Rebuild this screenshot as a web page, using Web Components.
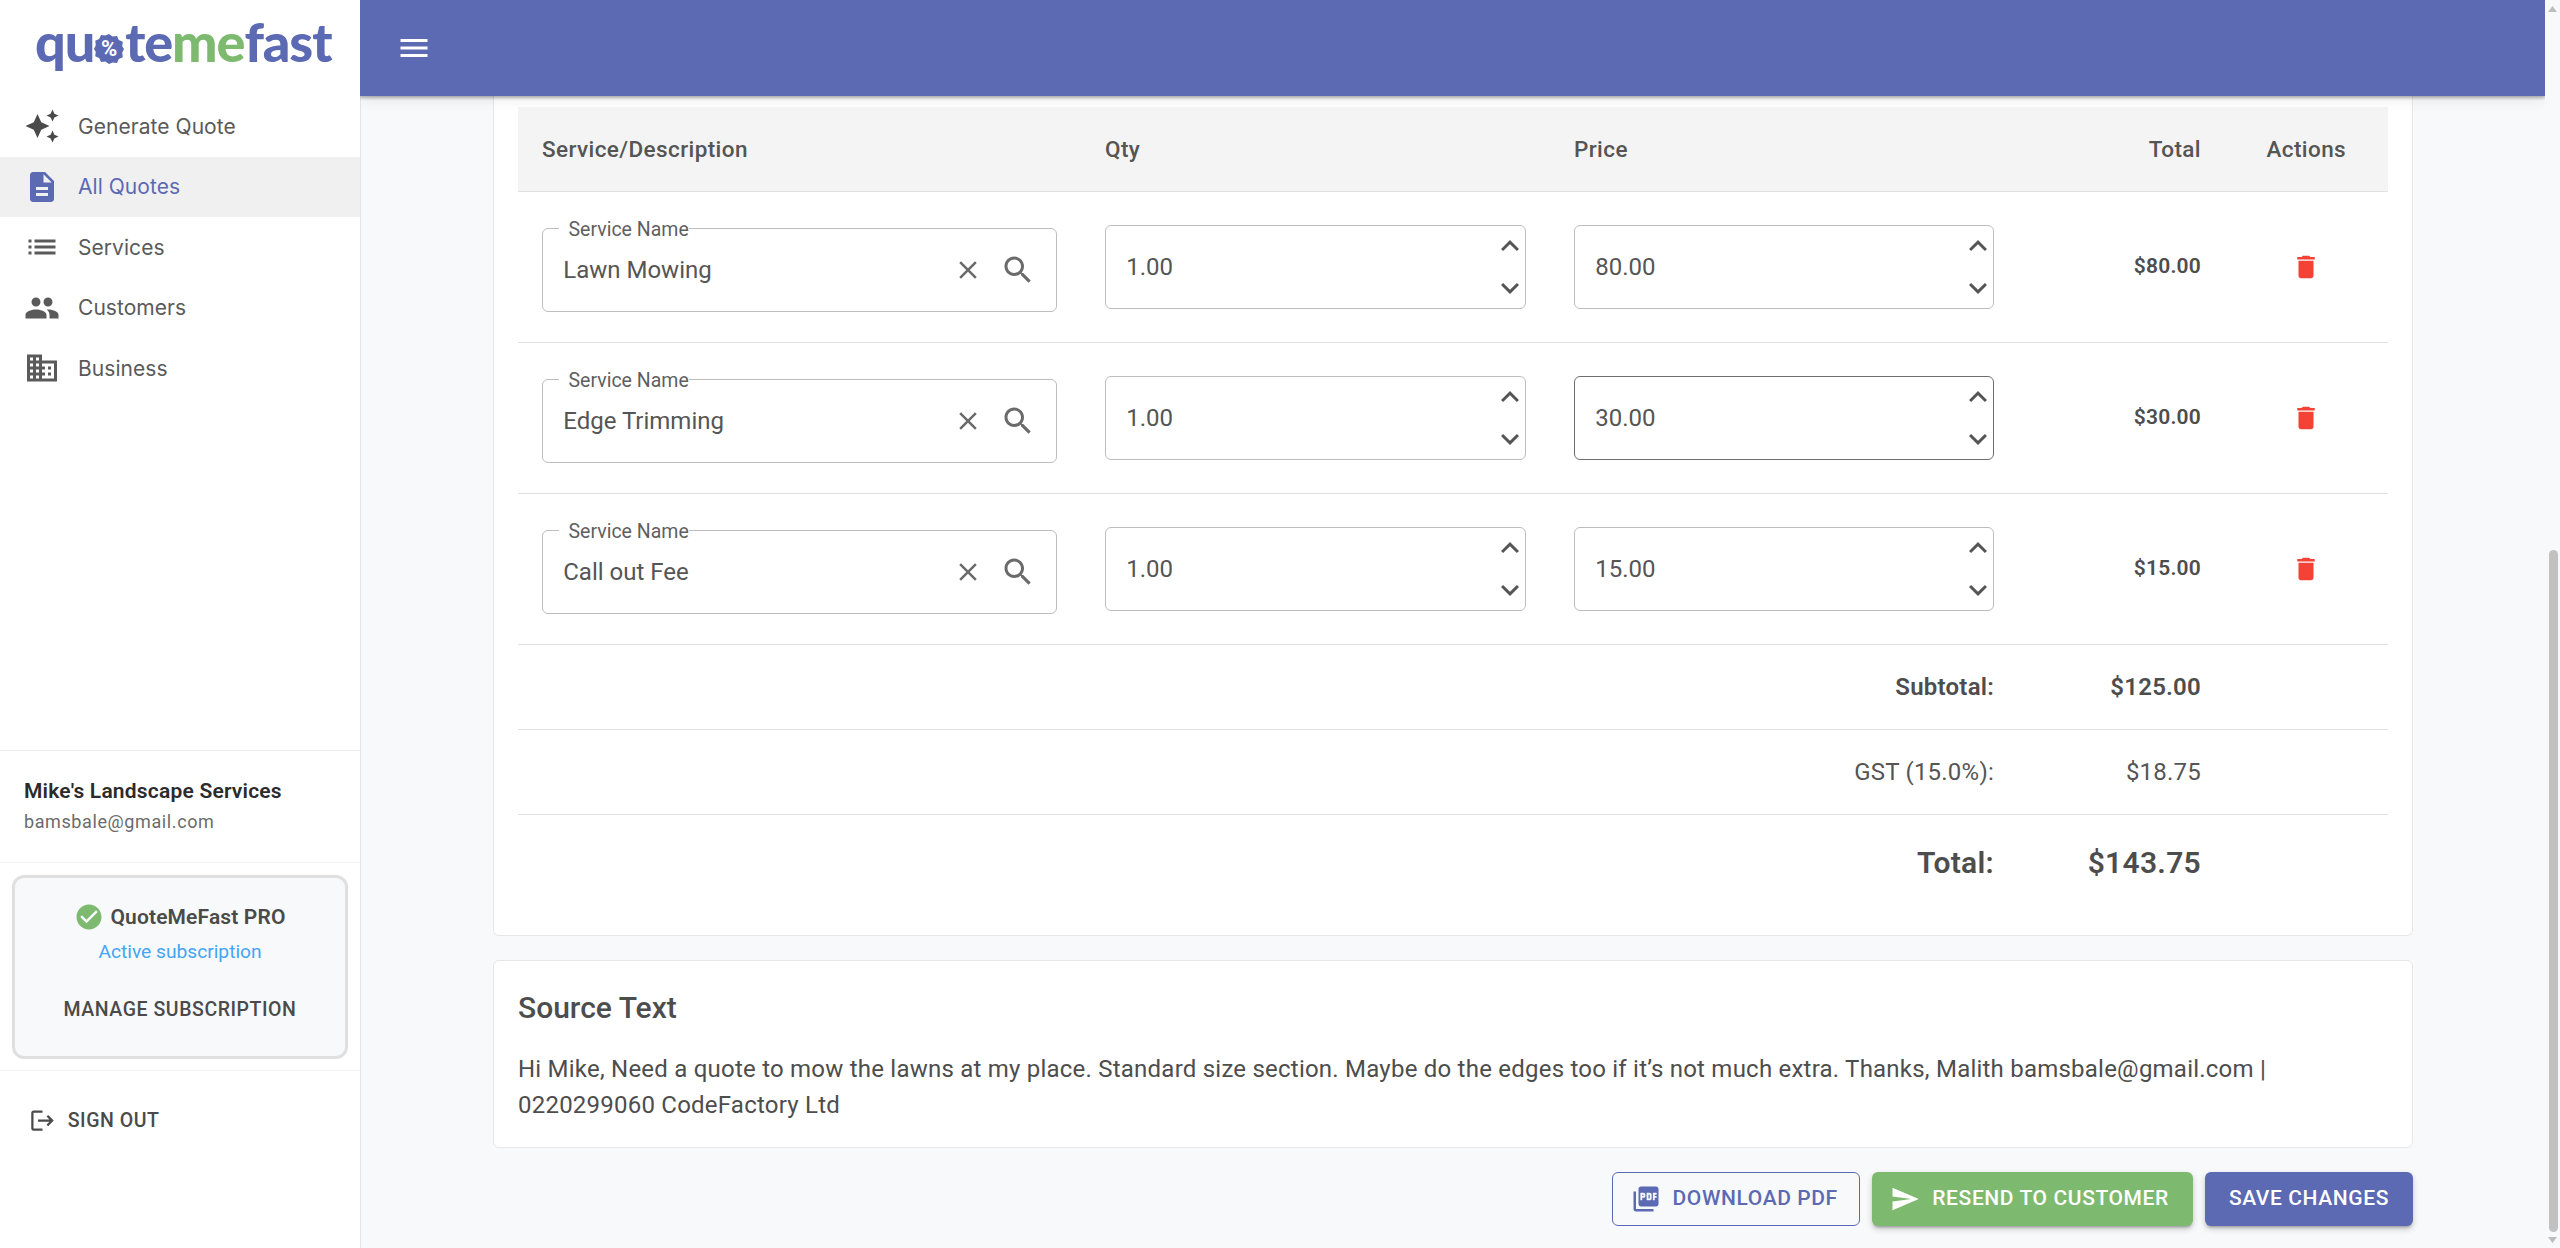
<!DOCTYPE html>
<html><head><meta charset="utf-8">
<style>
html,body{margin:0;padding:0;height:1248px;overflow:hidden;background:#f8f9fb;font-family:Roboto,"Liberation Sans",sans-serif;color:#4d4d4d}
</style></head><body>
<qmf-app></qmf-app>
<script>
const P={
menu:'M3 18h18v-2H3v2zm0-5h18v-2H3v2zm0-7v2h18V6H3z',
auto:'M19 9l1.25-2.75L23 5l-2.75-1.25L19 1l-1.25 2.75L15 5l2.75 1.25L19 9zm-7.5.5L9 4 6.5 9.5 1 12l5.5 2.5L9 20l2.5-5.5L17 12l-5.5-2.5zM19 15l-1.25 2.75L15 19l2.75 1.25L19 23l1.25-2.75L23 19l-2.75-1.25L19 15z',
desc:'M14 2H6c-1.1 0-1.99.9-1.99 2L4 20c0 1.1.89 2 1.99 2H18c1.1 0 2-.9 2-2V8l-6-6zm2 16H8v-2h8v2zm0-4H8v-2h8v2zm-3-5V3.5L18.5 9H13z',
list:'M3 13h2v-2H3v2zm0 4h2v-2H3v2zm0-8h2V7H3v2zm4 4h14v-2H7v2zm0 4h14v-2H7v2zM7 7v2h14V7H7z',
people:'M16 11c1.66 0 2.99-1.34 2.99-3S17.66 5 16 5c-1.66 0-3 1.34-3 3s1.34 3 3 3zm-8 0c1.66 0 2.99-1.34 2.99-3S9.66 5 8 5C6.34 5 5 6.34 5 8s1.34 3 3 3zm0 2c-2.33 0-7 1.17-7 3.5V19h14v-2.5c0-2.33-4.67-3.5-7-3.5zm8 0c-.29 0-.62.02-.97.05 1.16.84 1.97 1.97 1.97 3.45V19h6v-2.5c0-2.33-4.67-3.5-7-3.5z',
biz:'M12 7V3H2v18h20V7H12zM6 19H4v-2h2v2zm0-4H4v-2h2v2zm0-4H4V9h2v2zm0-4H4V5h2v2zm4 12H8v-2h2v2zm0-4H8v-2h2v2zm0-4H8V9h2v2zm0-4H8V5h2v2zm10 12h-8v-2h2v-2h-2v-2h2v-2h-2V9h8v10zm-2-8h-2v2h2v-2zm0 4h-2v2h2v-2z',
clear:'M19 6.41L17.59 5 12 10.59 6.41 5 5 6.41 10.59 12 5 17.59 6.41 19 12 13.41 17.59 19 19 17.59 13.41 12z',
search:'M15.5 14h-.79l-.28-.27C15.41 12.59 16 11.11 16 9.5 16 5.91 13.09 3 9.5 3S3 5.91 3 9.5 5.91 16 9.5 16c1.61 0 3.09-.59 4.23-1.57l.27.28v.79l5 4.99L20.49 19l-4.99-5zm-6 0C7.01 14 5 11.99 5 9.5S7.01 5 9.5 5 14 7.01 14 9.5 11.99 14 9.5 14z',
less:'M12 8l-6 6 1.41 1.41L12 10.83l4.59 4.58L18 14z',
more:'M16.59 8.59L12 13.17 7.41 8.59 6 10l6 6 6-6z',
del:'M6 19c0 1.1.9 2 2 2h8c1.1 0 2-.9 2-2V7H6v12zM19 4h-3.5l-1-1h-5l-1 1H5v2h14V4z',
check:'M12 2C6.48 2 2 6.48 2 12s4.48 10 10 10 10-4.48 10-10S17.52 2 12 2zm-2 15l-5-5 1.41-1.41L10 14.17l7.59-7.59L19 8l-9 9z',
logout:'M17 7l-1.41 1.41L18.17 11H8v2h10.17l-2.58 2.58L17 17l5-5zM4 5h8V3H4c-1.1 0-2 .9-2 2v14c0 1.1.9 2 2 2h8v-2H4V5z',
pdf:'M20 2H8c-1.1 0-2 .9-2 2v12c0 1.1.9 2 2 2h12c1.1 0 2-.9 2-2V4c0-1.1-.9-2-2-2zm-8.5 7.5c0 .83-.67 1.5-1.5 1.5H9v2H7.5V7H10c.83 0 1.5.67 1.5 1.5v1zm5 2c0 .83-.67 1.5-1.5 1.5h-2.5V7H15c.83 0 1.5.67 1.5 1.5v3zm4-3H19v1h1.5V11H19v2h-1.5V7h3v1.5zM9 9.5h1v-1H9v1zM4 6H2v14c0 1.1.9 2 2 2h14v-2H4V6zm10 5.5h1v-3h-1v3z',
send:'M2.01 21L23 12 2.01 3 2 10l15 2-15 2z'
};
function define(name,css,html,init){
  customElements.define(name,class extends HTMLElement{
    connectedCallback(){
      if(this.shadowRoot)return;
      const r=this.attachShadow({mode:'open'});
      r.innerHTML='<style>'+css+'</style>'+(typeof html==='function'?html(this):html);
      if(init)init(this,r);
    }
  });
}
define('q-icon',':host{display:inline-flex;flex:none;color:inherit}svg{display:block;width:100%;height:100%;fill:currentColor}',
 h=>`<svg viewBox="0 0 24 24"><path d="${P[h.getAttribute('name')]}"/></svg>`);

define('q-logo',`:host{display:flex;align-items:baseline;height:96px;box-sizing:border-box;padding:0 0 0 35px;font:900 54px/96px Lato,Inter,sans-serif;letter-spacing:-1.1px;color:#5c69b3;white-space:nowrap;position:relative;top:-6px}
 .g{color:#7dba6f}
 .b{display:inline-flex;width:30px;height:30px;position:relative;align-self:center;top:7px;margin:0 1px 0 0}
 .b svg{position:absolute;inset:0;width:100%;height:100%}
 .b i{position:relative;margin:auto;font:700 22px/30px Roboto,sans-serif;color:#fff;letter-spacing:0;font-style:normal}`,
 `<span>qu</span><span class="b"><svg viewBox="0 0 30 30"><path fill="#5c69b3" d="M15 0l3.6 2.6 4.4-.6 1.8 4 4 1.8-.6 4.4L30 15l-1.8 3.8.6 4.4-4 1.8-1.8 4-4.4-.6L15 30l-3.6-2.6-4.4.6-1.8-4-4-1.8.6-4.4L0 15l1.8-3.8-.6-4.4 4-1.8 1.8-4 4.4.6z"/></svg><i>%</i></span><span>te</span><span class="g">me</span><span>fast</span>`);

define('q-nav-item',`:host{display:flex;align-items:center;height:60.5px;padding-left:24px;font:400 21px/1 Inter,sans-serif;color:#5a5a5a;box-sizing:border-box;letter-spacing:.05px}
 :host([active]){background:#f0f0f0;color:#5c69b3}
 q-icon{width:36px;height:36px;margin-right:18px}
 :host([dark]) q-icon{color:#4a4a4a}`,
 h=>`<q-icon name="${h.getAttribute('icon')}"></q-icon><slot></slot>`);

define('q-sidebar',`:host{display:flex;flex-direction:column;width:360px;height:1248px;box-sizing:border-box;background:#fff;flex:none}
 nav{display:block;margin-top:0}
 .sp{flex:1}
 .user{border-top:1.5px solid #ececec;height:112px;box-sizing:border-box;padding:24.5px 24px 0}
 .user b{display:block;font:600 21px/30px Roboto,sans-serif;color:#2b2b2b;letter-spacing:.2px}
 .user span{display:block;font:400 18px/30px Roboto,sans-serif;color:#6b6b6b;letter-spacing:.6px;margin-top:1px}
 .subw{border-top:1.5px solid #f2f2f2;border-bottom:1.5px solid #f2f2f2;padding:11.5px 12px;height:209px;box-sizing:border-box}
 .sub{box-sizing:border-box;height:184px;border:3px solid #e0e0e0;border-radius:12px;background:#f8f9fb;display:flex;flex-direction:column;align-items:center}
 .pro{display:flex;align-items:center;gap:6px;margin-top:24px;height:30px;font:600 21px/30px Roboto,sans-serif;color:#4a4a4a;letter-spacing:.15px}
 .pro q-icon{width:30px;height:30px;color:#7dba6f}
 .act{font:400 19.2px/28px Roboto,sans-serif;color:#42a5f5;margin-top:6px}
 .man{font:500 19.5px/30px Roboto,sans-serif;color:#4a4a4a;margin-top:29px;letter-spacing:.55px}
 .out{display:flex;align-items:center;height:30px;margin:34.5px 0 112.5px 28.75px;font:500 19.5px/30px Roboto,sans-serif;color:#4a4a4a;letter-spacing:.55px}
 .out q-icon{width:27px;height:27px;margin-right:12px}`,
 `<q-logo></q-logo>
 <nav>
 <q-nav-item icon="auto" dark>Generate Quote</q-nav-item>
 <q-nav-item icon="desc" active>All Quotes</q-nav-item>
 <q-nav-item icon="list">Services</q-nav-item>
 <q-nav-item icon="people">Customers</q-nav-item>
 <q-nav-item icon="biz">Business</q-nav-item>
 </nav>
 <div class="sp"></div>
 <div class="user"><b>Mike's Landscape Services</b><span>bamsbale@gmail.com</span></div>
 <div class="subw"><div class="sub">
   <div class="pro"><q-icon name="check"></q-icon>QuoteMeFast PRO</div>
   <div class="act">Active subscription</div>
   <div class="man">MANAGE SUBSCRIPTION</div>
 </div></div>
 <div class="out"><q-icon name="logout"></q-icon>SIGN OUT</div>`);

define('q-appbar',`:host{display:flex;align-items:center;height:96px;box-sizing:border-box;background:#5c69b3;padding-left:36px;color:#fff;box-shadow:0 2px 3px rgba(0,0,0,.3),0 6px 12px rgba(0,0,0,.06);position:relative;z-index:2;flex:none}
 q-icon{width:36px;height:36px}`,`<q-icon name="menu"></q-icon>`);

define('q-service-field',`:host{display:flex;align-items:center;position:relative;height:84px;box-sizing:border-box;margin-top:7px;border:1.5px solid #bdbdbd;border-radius:6px;padding:0 0 0 20.25px;font:400 24px/1 Roboto,sans-serif;color:#555}
 label{position:absolute;left:15.5px;top:-9.5px;padding-left:10px;background:#fff;font:400 19.5px/20px Roboto,sans-serif;color:#5f5f5f}
 .t{flex:1}
 q-icon{color:#6a6a6a}
 .x{width:30px;height:30px;margin-right:17px}.s{width:36px;height:36px;margin-right:20px}`,
 h=>`<label>Service Name</label><span class="t"><slot></slot></span><q-icon class="x" name="clear"></q-icon><q-icon class="s" name="search"></q-icon>`);

define('q-number-field',`:host{display:flex;align-items:center;height:84px;box-sizing:border-box;border:1.5px solid #bdbdbd;border-radius:6px;padding:0 0 0 20.25px;font:400 24px/1 Roboto,sans-serif;color:#555}
 :host([focus]){border-color:#6e6e6e}
 .t{flex:1}
 .sp{display:flex;flex-direction:column;gap:6px;color:#555;margin-right:-2.5px}
 q-icon{width:36px;height:36px}`,
 `<span class="t"><slot></slot></span><div class="sp"><q-icon name="less"></q-icon><q-icon name="more"></q-icon></div>`);

const COLS='563px 469px 468px 207px 162.5px';
define('q-quote-row',`:host{display:grid;grid-template-columns:${COLS};height:151px;box-sizing:border-box;border-bottom:1.5px solid #e0e0e0;align-items:center}
 .c{padding:0 24px}
 .tot{text-align:right;font:600 21px/1 Roboto,sans-serif;color:#4d4d4d;letter-spacing:.2px}
 .a{display:flex;justify-content:center;color:#f44336}
 .a q-icon{width:30px;height:30px}`,
 h=>`<div class="c"><q-service-field>${h.getAttribute('name')}</q-service-field></div>
 <div class="c"><q-number-field>1.00</q-number-field></div>
 <div class="c"><q-number-field ${h.hasAttribute('focus')?'focus':''}>${h.getAttribute('price')}</q-number-field></div>
 <div class="c tot">$${h.getAttribute('price')}</div>
 <div class="a"><q-icon name="del"></q-icon></div>`);

define('q-sum-row',`:host{display:grid;grid-template-columns:1500px 207px 162.5px;height:85px;box-sizing:border-box;align-items:center;border-bottom:1.5px solid #e0e0e0;font:400 24px/1 Roboto,sans-serif;color:#555;letter-spacing:.225px}
 :host([bold]){font-weight:600;color:#4d4d4d}
 :host([big]){font:600 30px/1 Roboto,sans-serif;height:96px;border-bottom:0;color:#4d4d4d;letter-spacing:.28px}
 div{text-align:right;padding:0 24px}`,
 h=>`<div>${h.getAttribute('label')}</div><div>${h.getAttribute('value')}</div>`);

define('q-quote-table',`:host{display:block}
 .h{display:grid;grid-template-columns:${COLS};height:84.5px;box-sizing:border-box;background:#f4f4f4;border-bottom:1.5px solid #e0e0e0;align-items:center;font:500 22.5px/1 Roboto,sans-serif;letter-spacing:.4px;color:#555}
 .h div{padding:0 24px}.r{text-align:right}.m{text-align:center;padding:0!important}`,
 `<div class="h"><div>Service/Description</div><div>Qty</div><div>Price</div><div class="r">Total</div><div class="m">Actions</div></div>
 <q-quote-row name="Lawn Mowing" price="80.00"></q-quote-row>
 <q-quote-row name="Edge Trimming" price="30.00" focus></q-quote-row>
 <q-quote-row name="Call out Fee" price="15.00"></q-quote-row>
 <q-sum-row bold label="Subtotal:" value="$125.00"></q-sum-row>
 <q-sum-row label="GST (15.0%):" value="$18.75"></q-sum-row>
 <q-sum-row big label="Total:" value="$143.75"></q-sum-row>`);

define('q-card',`:host{display:block;background:#fff;border:1.5px solid #e6e7e9;border-radius:6px;box-sizing:border-box;padding:24px 24px 24px 24.5px}
 :host([cut]){border-top:0;border-top-left-radius:0;border-top-right-radius:0;padding-top:11px}`,`<slot></slot>`);

define('q-button',`:host{display:inline-flex;align-items:center;height:54px;box-sizing:border-box;border-radius:6px;font:500 21px/1 Roboto,sans-serif;letter-spacing:.6px;color:#fff;padding:0 24px;background:#5c69b3;box-shadow:0 3px 3px -2px rgba(0,0,0,.3),0 3px 6px rgba(0,0,0,.2);white-space:nowrap}
 :host([green]){background:#7dba6f;padding:0 24px 0 18px}
 :host([outline]){background:transparent;color:#5c69b3;border:1.5px solid #5c69b3;box-shadow:none;padding:0 21.5px 0 18px}
 q-icon{width:30px;height:30px;margin-right:12px}`,
 h=>(h.getAttribute('icon')?`<q-icon name="${h.getAttribute('icon')}"></q-icon>`:'')+'<slot></slot>');

define('q-scrollbar',`:host{display:flex;flex-direction:column;width:15px;height:1248px;background:#f8f9fb;flex:none;box-sizing:border-box;align-items:center}
 .u,.d{height:17px;display:flex;align-items:center;justify-content:center;flex:none}
 .u svg,.d svg{width:9px;height:6px;fill:#bdbdbd}
 .tr{flex:1;display:flex;flex-direction:column;padding-top:533px;width:9px;margin-left:2px}
 .th{flex:1;background:#c1c1c1;border-radius:5px;margin-bottom:-1px}`,
 `<div class="u"><svg viewBox="0 0 9 6"><path d="M4.5 0L9 6H0z"/></svg></div><div class="tr"><div class="th"></div></div><div class="d"><svg viewBox="0 0 9 6"><path d="M0 0h9L4.5 6z"/></svg></div>`);

define('q-main',`:host{display:flex;flex-direction:column;flex:1;min-width:0;height:1248px;background:#f8f9fb;overflow:hidden}
 .c{flex:1;border-left:1.5px solid #e4e4e4;padding:0 132px 0 131.5px;display:flex;flex-direction:column}
 .src{margin-top:24px;height:188px;padding-top:24px}
 h2{margin:0;font:500 30px/45px Roboto,sans-serif;color:#4d4d4d}
 p{margin:21.5px 0 0;font:400 24px/36px Roboto,sans-serif;color:#4d4d4d;letter-spacing:.225px}
 .btns{display:flex;justify-content:flex-end;gap:12px;margin-top:24px}`,
 `<q-appbar></q-appbar>
 <div class="c">
 <q-card cut><q-quote-table></q-quote-table></q-card>
 <q-card class="src"><h2>Source Text</h2><p>Hi Mike, Need a quote to mow the lawns at my place. Standard size section. Maybe do the edges too if it’s not much extra. Thanks, Malith bamsbale@gmail.com | 0220299060 CodeFactory Ltd</p></q-card>
 <div class="btns"><q-button outline icon="pdf">DOWNLOAD PDF</q-button><q-button green icon="send">RESEND TO CUSTOMER</q-button><q-button>SAVE CHANGES</q-button></div>
 </div>`);

define('qmf-app',`:host{display:flex;width:2560px;height:1248px;overflow:hidden}`,
 `<q-sidebar></q-sidebar><q-main></q-main><q-scrollbar></q-scrollbar>`);
</script>
</body></html>
